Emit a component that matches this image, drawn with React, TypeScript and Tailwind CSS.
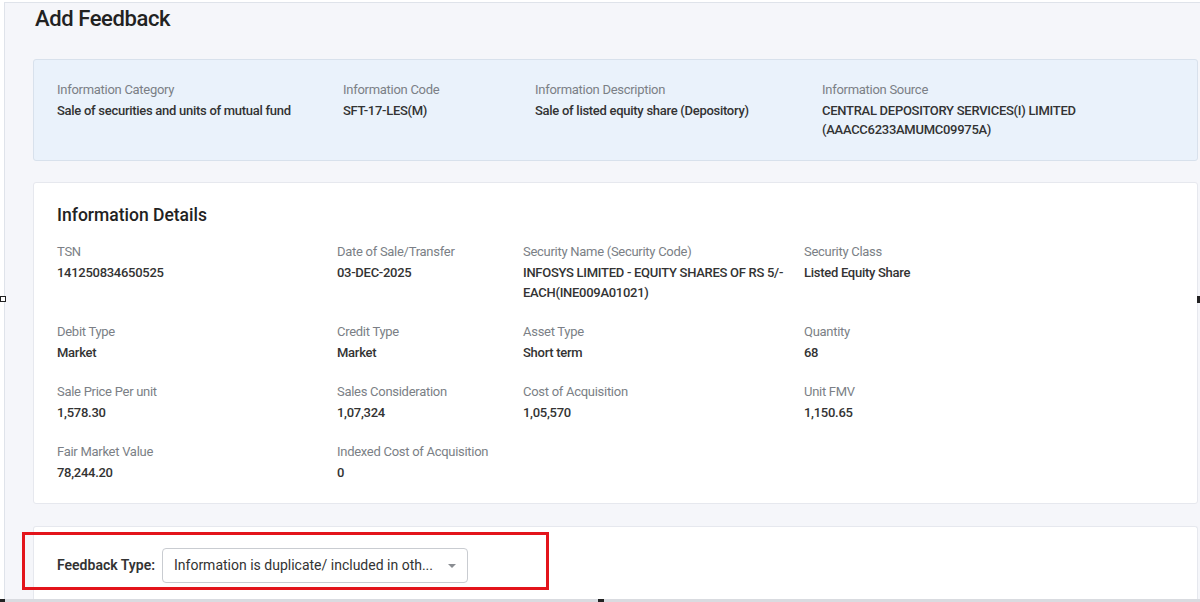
import React from 'react';

type Field = { label: string; value: string[] };

const summary: Field[] = [
  { label: 'Information Category', value: ['Sale of securities and units of mutual fund'] },
  { label: 'Information Code', value: ['SFT-17-LES(M)'] },
  { label: 'Information Description', value: ['Sale of listed equity share (Depository)'] },
  { label: 'Information Source', value: ['CENTRAL DEPOSITORY SERVICES(I) LIMITED', '(AAACC6233AMUMC09975A)'] },
];

const details: Field[] = [
  { label: 'TSN', value: ['141250834650525'] },
  { label: 'Date of Sale/Transfer', value: ['03-DEC-2025'] },
  { label: 'Security Name (Security Code)', value: ['INFOSYS LIMITED - EQUITY SHARES OF RS 5/-', 'EACH(INE009A01021)'] },
  { label: 'Security Class', value: ['Listed Equity Share'] },
  { label: 'Debit Type', value: ['Market'] },
  { label: 'Credit Type', value: ['Market'] },
  { label: 'Asset Type', value: ['Short term'] },
  { label: 'Quantity', value: ['68'] },
  { label: 'Sale Price Per unit', value: ['1,578.30'] },
  { label: 'Sales Consideration', value: ['1,07,324'] },
  { label: 'Cost of Acquisition', value: ['1,05,570'] },
  { label: 'Unit FMV', value: ['1,150.65'] },
  { label: 'Fair Market Value', value: ['78,244.20'] },
  { label: 'Indexed Cost of Acquisition', value: ['0'] },
];

const App: React.FC = () => {
  return (
    <div className="relative h-[602px] w-[1200px] overflow-hidden bg-white font-['Roboto','Liberation_Sans',sans-serif] text-[#333]">
      <div className="ml-[4px] mt-[2px] h-[597px] border-l border-t border-[#dfe3ea] bg-[#f5f6fa] pl-[28px] pr-[2px] pt-[2px]">
        <h1 className="ml-[2px] text-[22px] leading-[28px] font-medium tracking-[-0.4px] text-[#222]">Add Feedback</h1>

        {/* Summary strip */}
        <div className="mt-[26px] rounded-[3px] border border-[#d8e1ec] bg-[#eaf2fb] pl-[23px] pt-[20px] pb-[21px]">
          <div className="grid grid-cols-[286px_192px_287px_1fr]">
            {summary.map((f) => (
              <div key={f.label}>
                <div className="text-[13px] leading-[20px] tracking-[-0.28px] text-[#7b7f86]">{f.label}</div>
                <div className="mt-[1px] text-[13px] leading-[19px] font-medium tracking-[-0.28px] text-[#333]">
                  {f.value.map((v) => (
                    <div key={v}>{v}</div>
                  ))}
                </div>
              </div>
            ))}
          </div>
        </div>

        {/* Details card */}
        <div className="mt-[21px] rounded-[3px] border border-[#e6e8ee] bg-white pl-[23px] pt-[20px] pb-[20px]">
          <h2 className="text-[17.5px] leading-[24px] font-medium text-[#222]">Information Details</h2>
          <div className="mt-[15px] grid grid-cols-[280px_186px_281px_1fr] gap-y-[19px]">
            {details.map((f) => (
              <div key={f.label}>
                <div className="text-[13px] leading-[20px] tracking-[-0.28px] text-[#7b7f86]">{f.label}</div>
                <div className="mt-[1px] text-[13px] leading-[20px] font-medium tracking-[-0.28px] text-[#333]">
                  {f.value.map((v) => (
                    <div key={v}>{v}</div>
                  ))}
                </div>
              </div>
            ))}
          </div>
        </div>

        {/* Feedback card */}
        <div className="mt-[22px] h-[80px] rounded-t-[3px] border border-b-0 border-[#e6e8ee] bg-white pl-[23px] pt-[21px]">
          <div className="flex items-center gap-[7px]">
            <span className="text-[14px] font-semibold text-[#333]">Feedback Type:</span>
            <div className="flex h-[35px] w-[306px] items-center justify-between rounded-[4px] border border-[#c9ccd1] bg-white pl-[11px] pr-[11px]">
              <span className="text-[14px] text-[#333]">Information is duplicate/ included in oth...</span>
              <span className="h-0 w-0 border-x-[4px] border-t-[4px] border-x-transparent border-t-[#8a8d92]" />
            </div>
          </div>
        </div>
      </div>

      {/* bottom edge of the capture */}
      <div className="absolute bottom-0 left-0 h-[3px] w-full bg-[#d9dbe0]" />

      {/* red annotation box */}
      <div className="absolute left-[22px] top-[532px] h-[58px] w-[527px] border-[3px] border-[#e3141b]" />

      {/* crop handles */}
      <div className="absolute left-0 top-[296px] h-[6px] w-[6px] border border-[#222] bg-white" />
      <div className="absolute right-0 top-[296px] h-[7px] w-[3px] bg-[#222]" />
      <div className="absolute bottom-0 left-0 h-[3px] w-[5px] bg-[#222]" />
      <div className="absolute bottom-0 left-[598px] h-[3px] w-[6px] bg-[#222]" />
    </div>
  );
};

export default App;
